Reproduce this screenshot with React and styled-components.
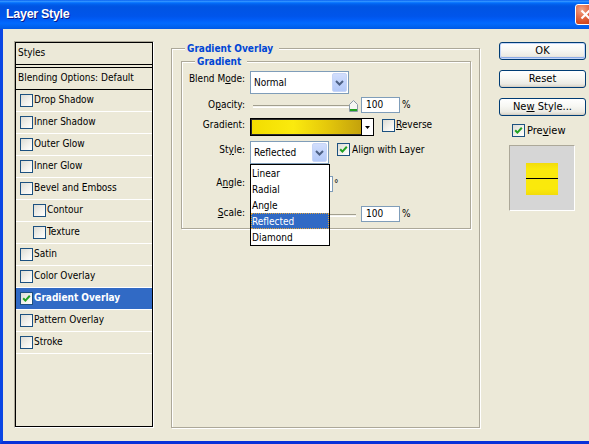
import React from "react";
import styled, { createGlobalStyle } from "styled-components";

const UI = `"DejaVu Sans Condensed", "DejaVu Sans", sans-serif`;

const GlobalStyle = createGlobalStyle`
  *, *::before, *::after { box-sizing: border-box; }
  html, body { margin: 0; padding: 0; background: #ece9d8; }
  #root { width: 589px; height: 444px; }
`;

const Window = styled.div`
  width: 589px;
  height: 444px;
  display: flex;
  flex-direction: column;
  overflow: hidden;
  font-family: ${UI};
  font-stretch: semi-condensed;
  font-size: 10px;
  line-height: 13px;
  color: #000;
`;

const TitleBar = styled.div`
  flex: 0 0 29px;
  display: flex;
  align-items: center;
  padding-left: 6px;
  background: linear-gradient(
    180deg,
    #0058ee 0%,
    #3593ff 4%,
    #288eff 6%,
    #127dff 8%,
    #036ffc 10%,
    #0262ee 14%,
    #0057e5 20%,
    #0054e3 24%,
    #0055eb 56%,
    #005bf5 66%,
    #026afe 80%,
    #0062ef 92%,
    #0058e6 100%
  );
`;

const Title = styled.span`
  color: #fff;
  font-family: "Liberation Sans", Arial, sans-serif;
  font-weight: bold;
  font-size: 12.5px;
  letter-spacing: -0.3px;
  text-shadow: 1px 1px 0 #0a1a8a;
`;

const CloseButton = styled.div`
  margin-left: auto;
  margin-right: -7px;
  flex: 0 0 21px;
  height: 21px;
  border: 1px solid #fff;
  border-radius: 3px;
  background: radial-gradient(circle at 30% 25%, #f0a58a 0%, #e5704c 35%, #d24a22 70%, #c23a15 100%);
  display: flex;
  align-items: center;
  justify-content: center;
`;

const Frame = styled.div`
  flex: 1;
  min-height: 0;
  display: flex;
  align-items: flex-start;
  border-left: 3px solid #0a46e4;
  border-bottom: 3px solid #0831d9;
  background: #ece9d8;
  padding: 12px 0 0 11px;
`;

/* ---------- Left styles list ---------- */

const StylesFrame = styled.div`
  flex: 0 0 140px;
  height: 387px;
  border: 1px solid;
  border-color: #aca899 #fff #fff #aca899;
`;

const StylesList = styled.div`
  height: 100%;
  border: 1px solid #000;
  display: flex;
  flex-direction: column;
`;

const ListHeader = styled.div`
  height: 22px;
  border-bottom: 1px solid #000;
  padding: 3px 0 0 2px;
`;

const BlendingRow = styled.div`
  height: 23px;
  margin-top: 2px;
  border-top: 1px solid #000;
  border-bottom: 1px solid #000;
  padding: 3px 0 0 2px;
`;

const EffectRow = styled.div`
  height: 22px;
  display: flex;
  align-items: flex-start;
  padding: 3px 0 0 ${(p) => (p.$indent ? 17 : 4)}px;
  border-bottom: 1px solid #fff;
  background: ${(p) => (p.$selected ? "#316ac5" : "transparent")};
  color: ${(p) => (p.$selected ? "#fff" : "#000")};
  font-weight: ${(p) => (p.$selected ? "bold" : "normal")};
`;

const EffectName = styled.span`
  margin-left: 1px;
  white-space: nowrap;
`;

const CheckBox = styled.span`
  flex: 0 0 13px;
  width: 13px;
  height: 13px;
  margin-top: ${(p) => p.$mt || 0}px;
  border: 1px solid #1c5180;
  background: linear-gradient(135deg, #dcdcd5 0%, #f2f1ec 55%, #ffffff 100%);
  display: inline-flex;
  align-items: center;
  justify-content: center;
`;

const Check = ({ checked, mt }) => (
  <CheckBox $mt={mt}>
    {checked && (
      <svg width="9" height="9" viewBox="0 0 9 9">
        <polyline points="1.2,4.2 3.4,6.6 7.8,1.8" fill="none" stroke="#21a121" strokeWidth="2" />
      </svg>
    )}
  </CheckBox>
);

/* ---------- Group boxes ---------- */

const GroupBox = styled.div`
  border: 1px solid #aca899;
  box-shadow: inset 1px 1px 0 #fff, 1px 1px 0 #fff;
  display: flex;
  flex-direction: column;
`;

const MainGroup = styled(GroupBox)`
  flex: 0 0 309px;
  height: 380px;
  margin: 7px 0 0 17px;
`;

const InnerGroup = styled(GroupBox)`
  height: 168px;
  margin: 6px 8px 0 9px;
`;

const Legend = styled.div`
  align-self: flex-start;
  margin: -7px 0 0 13px;
  padding: 0 6px 0 2px;
  background: #ece9d8;
  color: #0046d5;
  font-weight: bold;
  line-height: 13px;
`;

const FieldRow = styled.div`
  display: flex;
  align-items: flex-start;
  height: ${(p) => p.$h}px;
  margin-top: ${(p) => p.$mt}px;
`;

const FieldLabel = styled.span`
  flex: 0 0 63px;
  margin-right: 5px;
  text-align: right;
  padding-top: ${(p) => p.$pt || 0}px;
  white-space: nowrap;
`;

const Select = styled.div`
  position: relative;
  flex: 0 0 ${(p) => p.$w}px;
  height: 23px;
  border: 1px solid #7f9db9;
  background: #fff;
  display: flex;
`;

const SelectValue = styled.span`
  flex: 1;
  padding: 4px 0 0 3px;
`;

const DropButton = styled.span`
  flex: 0 0 15px;
  margin: 1px;
  border: 1px solid #c6d5f7;
  border-radius: 2px;
  background: linear-gradient(180deg, #d2defc 0%, #c1d3fb 50%, #b4c9f8 100%);
  display: flex;
  align-items: center;
  justify-content: center;
`;

const Chevron = () => (
  <svg width="9" height="6" viewBox="0 0 9 6">
    <polyline points="1,1 4.5,4.5 8,1" fill="none" stroke="#4d6185" strokeWidth="2" />
  </svg>
);

const DropList = styled.div`
  position: absolute;
  top: 22px;
  left: -1px;
  width: 80px;
  z-index: 2;
  border: 1px solid #000;
  background: #fff;
  display: flex;
  flex-direction: column;
`;

const DropItem = styled.div`
  height: 16px;
  padding: 1px 0 0 1px;
  line-height: 15px;
  background: ${(p) => (p.$active ? "#316ac5" : "#fff")};
  color: ${(p) => (p.$active ? "#fff" : "#000")};
  outline: ${(p) => (p.$active ? "1px dotted #e0a33c" : "none")};
  outline-offset: -1px;
`;

const SliderBox = styled.div`
  position: relative;
  flex: 0 0 111px;
  height: 16px;
`;

const SliderGroove = styled.div`
  margin: 8px 0 0 3px;
  width: 103px;
  height: 3px;
  border-top: 1px solid #a29f8e;
  border-bottom: 1px solid #fff;
  background: #f3f2ec;
`;

const ThumbSvg = styled.svg`
  position: absolute;
  top: 3px;
`;

const Slider = ({ pos }) => (
  <SliderBox>
    <SliderGroove />
    <ThumbSvg width="9" height="12" viewBox="0 0 9 12" style={{ left: 3 + pos * 96 }}>
      <path d="M0.5 11.5 V4.5 L4.5 0.5 L8.5 4.5 V11.5 Z" fill="#f6f6f2" stroke="#8b9aa6" />
      <rect x="1" y="9" width="7" height="2" fill="#21a121" />
    </ThumbSvg>
  </SliderBox>
);

const NumberBox = styled.div`
  flex: 0 0 ${(p) => p.$w || 39}px;
  height: 16px;
  margin-left: ${(p) => p.$ml || 0}px;
  border: 1px solid #7f9db9;
  background: #fff;
  padding-left: 4px;
  line-height: 14px;
`;

const Unit = styled.span`
  margin-left: ${(p) => p.$ml || 2}px;
  line-height: 16px;
`;

const GradientSwatch = styled.div`
  flex: 0 0 124px;
  height: 18px;
  border: 1px solid #000;
  background: #2b2b2b;
  display: flex;
`;

const GradientFill = styled.div`
  flex: 1;
  margin: 1px 0 1px 1px;
  background: linear-gradient(90deg, #f2dd00 0%, #fbea0e 38%, #e5c90b 68%, #c4a20c 100%);
`;

const SwatchArrow = styled.div`
  flex: 0 0 12px;
  border-left: 1px solid #000;
  background: #fff;
  display: flex;
  align-items: center;
  justify-content: center;
`;

const CheckText = styled.span`
  margin-left: ${(p) => p.$ml || 1}px;
  padding-top: ${(p) => p.$pt || 0}px;
  white-space: nowrap;
`;

const Spacer = styled.span`
  flex: 0 0 ${(p) => p.$w}px;
`;

const Dial = styled.span`
  flex: 0 0 16px;
  height: 16px;
  border: 1px solid #7f9db9;
  border-radius: 50%;
  background: #fff;
`;

/* ---------- Right column ---------- */

const SideColumn = styled.div`
  flex: 0 0 87px;
  margin: 1px 0 0 19px;
  display: flex;
  flex-direction: column;
`;

const Button = styled.button`
  height: 18px;
  margin-top: ${(p) => p.$mt || 0}px;
  padding: 0;
  border: 1px solid #003c74;
  border-radius: 3px;
  background: linear-gradient(180deg, #ffffff 0%, #f7f7f3 45%, #ecebe4 80%, #d8d3c7 100%);
  box-shadow: ${(p) =>
    p.$default
      ? "inset 0 0 0 1px #c4d6f8, inset 0 -1px 0 1px #8cabe8"
      : "inset 0 -1px 0 #d6d0c5"};
  font-family: ${UI};
  font-stretch: semi-condensed;
  font-size: 11px;
  line-height: 16px;
  color: #000;
  text-align: center;
`;

const PreviewRow = styled.div`
  display: flex;
  align-items: flex-start;
  margin-top: 8px;
  padding-left: 13px;
  font-size: 11px;
`;

const PreviewBox = styled.div`
  width: 66px;
  height: 66px;
  margin: 8px 0 0 10px;
  border: 1px solid;
  border-color: #aca899 #fff #fff #aca899;
  background: #d6d6d6;
  display: flex;
  align-items: center;
  justify-content: center;
  padding-top: 1px;
`;

const PreviewSwatch = styled.div`
  width: 32px;
  height: 32px;
  background: linear-gradient(
    180deg,
    #f2dc0a 0px,
    #fae90c 6px,
    #fae90c 15px,
    #000 15px,
    #000 16px,
    #fae90c 16px,
    #fae90c 26px,
    #f2dc0a 32px
  );
`;

const effects = [
  { label: "Drop Shadow" },
  { label: "Inner Shadow" },
  { label: "Outer Glow" },
  { label: "Inner Glow" },
  { label: "Bevel and Emboss" },
  { label: "Contour", indent: true },
  { label: "Texture", indent: true },
  { label: "Satin" },
  { label: "Color Overlay" },
  { label: "Gradient Overlay", checked: true, selected: true },
  { label: "Pattern Overlay" },
  { label: "Stroke" },
];

const styleOptions = ["Linear", "Radial", "Angle", "Reflected", "Diamond"];

export default function App() {
  return (
    <>
      <GlobalStyle />
      <Window>
        <TitleBar>
          <Title>Layer Style</Title>
          <CloseButton>
            <svg width="11" height="11" viewBox="0 0 11 11">
              <path d="M1.5 1.5 L9.5 9.5 M9.5 1.5 L1.5 9.5" stroke="#fff" strokeWidth="2.2" />
            </svg>
          </CloseButton>
        </TitleBar>
        <Frame>
          <StylesFrame>
            <StylesList>
              <ListHeader>Styles</ListHeader>
              <BlendingRow>Blending Options: Default</BlendingRow>
              {effects.map((e) => (
                <EffectRow key={e.label} $indent={e.indent} $selected={e.selected}>
                  <Check checked={e.checked} mt={1} />
                  <EffectName>{e.label}</EffectName>
                </EffectRow>
              ))}
            </StylesList>
          </StylesFrame>

          <MainGroup>
            <Legend>Gradient Overlay</Legend>
            <InnerGroup>
              <Legend>Gradient</Legend>

              <FieldRow $h={23} $mt={3}>
                <FieldLabel $pt={1}>
                  Blend M<u>o</u>de:
                </FieldLabel>
                <Select $w={99}>
                  <SelectValue>Normal</SelectValue>
                  <DropButton>
                    <Chevron />
                  </DropButton>
                </Select>
              </FieldRow>

              <FieldRow $h={16} $mt={3}>
                <FieldLabel $pt={1}>
                  O<u>p</u>acity:
                </FieldLabel>
                <Slider pos={1} />
                <NumberBox>100</NumberBox>
                <Unit>%</Unit>
              </FieldRow>

              <FieldRow $h={18} $mt={5}>
                <FieldLabel>Gradient:</FieldLabel>
                <GradientSwatch>
                  <GradientFill />
                  <SwatchArrow>
                    <svg width="5" height="3" viewBox="0 0 5 3">
                      <polygon points="0,0 5,0 2.5,3" fill="#000" />
                    </svg>
                  </SwatchArrow>
                </GradientSwatch>
                <Spacer $w={8} />
                <Check mt={1} />
                <CheckText $pt={0}>
                  <u>R</u>everse
                </CheckText>
              </FieldRow>

              <FieldRow $h={23} $mt={5}>
                <FieldLabel $pt={2}>
                  St<u>y</u>le:
                </FieldLabel>
                <Select $w={79}>
                  <SelectValue>Reflected</SelectValue>
                  <DropButton>
                    <Chevron />
                  </DropButton>
                  <DropList>
                    {styleOptions.map((o) => (
                      <DropItem key={o} $active={o === "Reflected"}>
                        {o}
                      </DropItem>
                    ))}
                  </DropList>
                </Select>
                <Spacer $w={8} />
                <Check checked mt={2} />
                <CheckText $ml={2} $pt={2}>
                  Align with Layer
                </CheckText>
              </FieldRow>

              <FieldRow $h={16} $mt={12}>
                <FieldLabel>
                  A<u>n</u>gle:
                </FieldLabel>
                <Dial />
                <NumberBox $w={41} $ml={26}>
                  90
                </NumberBox>
                <Unit $ml={1}>°</Unit>
              </FieldRow>

              <FieldRow $h={16} $mt={14}>
                <FieldLabel>
                  <u>S</u>cale:
                </FieldLabel>
                <Slider pos={0.1} />
                <NumberBox>100</NumberBox>
                <Unit>%</Unit>
              </FieldRow>
            </InnerGroup>
          </MainGroup>

          <SideColumn>
            <Button $default>OK</Button>
            <Button $mt={10}>Reset</Button>
            <Button $mt={10}>
              Ne<u>w</u> Style...
            </Button>
            <PreviewRow>
              <Check checked />
              <CheckText $ml={2}>
                Pre<u>v</u>iew
              </CheckText>
            </PreviewRow>
            <PreviewBox>
              <PreviewSwatch />
            </PreviewBox>
          </SideColumn>
        </Frame>
      </Window>
    </>
  );
}
